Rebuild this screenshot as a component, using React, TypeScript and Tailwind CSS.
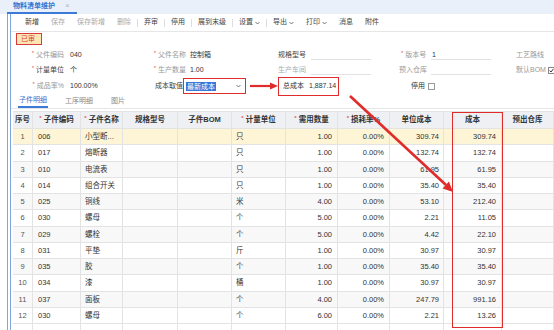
import React from 'react';

// 子件明细数据
interface Row {
  no: number;
  code: string;
  name: string;
  unit: string;
  qty: string;
  loss: string;
  price: string;
  cost: string;
}

const rows: Row[] = [
  { no: 1, code: "006", name: "小型断...", unit: "只", qty: "1.00", loss: "0.00%", price: "309.74", cost: "309.74" },
  { no: 2, code: "017", name: "熔断器", unit: "只", qty: "1.00", loss: "0.00%", price: "132.74", cost: "132.74" },
  { no: 3, code: "010", name: "电流表", unit: "只", qty: "1.00", loss: "0.00%", price: "61.95", cost: "61.95" },
  { no: 4, code: "014", name: "组合开关", unit: "只", qty: "1.00", loss: "0.00%", price: "35.40", cost: "35.40" },
  { no: 5, code: "025", name: "铜线", unit: "米", qty: "4.00", loss: "0.00%", price: "53.10", cost: "212.40" },
  { no: 6, code: "030", name: "螺母", unit: "个", qty: "5.00", loss: "0.00%", price: "2.21", cost: "11.05" },
  { no: 7, code: "029", name: "螺栓", unit: "个", qty: "5.00", loss: "0.00%", price: "4.42", cost: "22.10" },
  { no: 8, code: "031", name: "平垫", unit: "斤", qty: "1.00", loss: "0.00%", price: "30.97", cost: "30.97" },
  { no: 9, code: "035", name: "胶", unit: "个", qty: "1.00", loss: "0.00%", price: "35.40", cost: "35.40" },
  { no: 10, code: "034", name: "漆", unit: "桶", qty: "1.00", loss: "0.00%", price: "30.97", cost: "30.97" },
  { no: 11, code: "037", name: "面板", unit: "个", qty: "4.00", loss: "0.00%", price: "247.79", cost: "991.16" },
  { no: 12, code: "030", name: "螺母", unit: "个", qty: "6.00", loss: "0.00%", price: "2.21", cost: "13.26" },
];

const headers: { label: string; req?: boolean }[] = [
  { label: "序号" },
  { label: "子件编码", req: true },
  { label: "子件名称", req: true },
  { label: "规格型号" },
  { label: "子件BOM" },
  { label: "计量单位", req: true },
  { label: "需用数量", req: true },
  { label: "损耗率%", req: true },
  { label: "单位成本" },
  { label: "成本" },
  { label: "预出仓库" },
];

const cols = "grid grid-cols-[20px_48px_42px_55px_54px_54px_52px_52px_54px_58px_52px]";
const cell = "border-r border-b border-[#e3e3e3] h-full flex items-center overflow-hidden whitespace-nowrap";

const Star = () => <span className="text-[#e05a5a] text-[6px] mr-[2px] relative -top-[2px]">*</span>;

const tools = [
  { t: "新增" },
  { t: "保存", dim: true },
  { t: "保存新增", dim: true },
  { t: "删除", dim: true, sep: true },
  { t: "弃审", sep: true },
  { t: "停用", sep: true },
  { t: "展到末级", sep: true },
  { t: "设置", dd: true, sep: true },
  { t: "导出", dd: true },
  { t: "打印", dd: true },
  { t: "消息" },
  { t: "附件" },
];

const Caret = () => (
  <svg width="5" height="4" viewBox="0 0 5 4" className="ml-[2px]">
    <path d="M0.5 1 L2.5 3 L4.5 1" stroke="#666" strokeWidth="0.9" fill="none" />
  </svg>
);

const App: React.FC = () => {
  return (
    <div className="w-[554px] h-[330px] overflow-hidden relative bg-white text-[#333] font-['Liberation_Sans','Noto_Sans_CJK_SC',sans-serif]">
      {/* 页签栏 */}
      <div className="h-[14px] bg-[#eaf0f9] flex items-end">
        <div className="ml-[7px] w-[70px] h-full flex items-center border-b-2 border-[#3b7ad6] text-[7px] text-[#2f74d0]">
          <span className="ml-[6px] font-bold">物料清单维护</span>
          <span className="ml-[10px] text-[#aab4c4] text-[8px]">×</span>
        </div>
      </div>

      <div className="ml-[7px] border-l-[4px] border-double border-[#7ea5dd] h-[316px]">
        {/* 工具栏 */}
        <div className="h-[18px] flex items-center pl-[14px] border-b border-[#e6e6e6] text-[7px] whitespace-nowrap">
          {tools.map((b, i) => (
            <React.Fragment key={i}>
              <span className={`flex items-center ${b.dim ? "text-[#aaa]" : "text-[#444]"} ${b.sep ? "mr-[6px]" : "mr-[12px]"}`}>
                {b.t}
                {b.dd && <Caret />}
              </span>
              {b.sep && <span className="w-px h-[8px] bg-[#ddd] mr-[6px]" />}
            </React.Fragment>
          ))}
        </div>

        {/* 状态 */}
        <div className="h-[14px] flex items-center pl-[5px]">
          <span className="w-[26px] h-[12px] border border-[#d93a3a] bg-[#fde6b4] text-[#d93a3a] text-[7px] flex items-center pl-[4px]">已审</span>
        </div>

        {/* 表头表单 */}
        <div className="text-[7px] pt-[1px] whitespace-nowrap [&>div>div]:shrink-0">
          <div className="flex items-center h-[15.5px]">
            <div className="w-[53px] text-right text-[#999]"><Star />父件编码</div>
            <div className="w-[76px] pl-[6px]">040</div>
            <div className="w-[46px] text-right text-[#999]"><Star />父件名称</div>
            <div className="w-[92px] pl-[4px]">控制箱</div>
            <div className="w-[33px] text-[#444]">规格型号</div>
            <div className="w-[60px] h-[10px] border-b border-[#e2e2e2]" />
            <div className="w-[30px]" />
            <div className="w-[30px] text-[#999]"><Star />版本号</div>
            <div className="w-[60px] h-[10px] pl-[1px] border-b border-[#e2e2e2]">1</div>
            <div className="w-[25px]" />
            <div className="text-[#999]">工艺路线</div>
          </div>
          <div className="flex items-center h-[15.5px]">
            <div className="w-[53px] text-right text-[#444]"><Star />计量单位</div>
            <div className="w-[76px] pl-[6px]">个</div>
            <div className="w-[46px] text-right text-[#999]"><Star />生产数量</div>
            <div className="w-[92px] pl-[4px]">1.00</div>
            <div className="w-[33px] text-[#aaa]">生产车间</div>
            <div className="w-[60px] h-[10px] border-b border-[#e2e2e2]" />
            <div className="w-[28px]" />
            <div className="w-[32px] text-[#999]">预入仓库</div>
            <div className="w-[60px] h-[10px] border-b border-[#e2e2e2]" />
            <div className="w-[25px]" />
            <div className="flex items-center text-[#999]">
              默认BOM
              <span className="ml-[2px] w-[7px] h-[7px] border border-[#888] flex items-center justify-center">
                <svg width="5" height="5" viewBox="0 0 5 5"><path d="M0.6 2.6 L2 4 L4.5 0.8" stroke="#333" strokeWidth="1" fill="none" /></svg>
              </span>
            </div>
          </div>
          <div className="flex items-center h-[16px]">
            <div className="w-[53px] text-right text-[#999]"><Star />成品率%</div>
            <div className="w-[76px] pl-[6px]">100.00%</div>
            <div className="w-[43px] text-right text-[#444]">成本取值</div>
            <div className="w-[63px] h-[16px] border-[1.5px] border-[#e02b2b] flex items-center pl-[2px] pr-[4px]">
              <span className="bg-[#3977d6] text-white px-[1px] leading-[9px]">最新成本</span>
              <span className="flex-1" />
              <Caret />
            </div>
            <div className="w-[32px]" />
            <div className="w-[61px] h-[19px] border-[1.5px] border-[#e02b2b] flex items-center pl-[4px] text-[#333]">
              总成本<span className="ml-[5px]">1,887.14</span>
            </div>
            <div className="w-[72px]" />
            <div className="flex items-center">
              停用
              <span className="ml-[3px] w-[7px] h-[7px] border border-[#999] bg-white" />
            </div>
          </div>
        </div>

        {/* 子页签 */}
        <div className="h-[14px] mt-[1px] flex items-end text-[7px] border-b border-[#e6e6e6] pl-[7px]">
          <div className="h-full flex items-center border-b-2 border-[#3b7ad6] text-[#2f74d0] px-[1px]">子件明细</div>
          <div className="h-full flex items-center ml-[17px] text-[#888]">工序明细</div>
          <div className="h-full flex items-center ml-[18px] text-[#888]">图片</div>
        </div>

        {/* 表格 */}
        <div className="ml-[2px] mt-[2px] text-[7.5px]">
          <div className={`${cols} h-[18px] bg-[#eef0f3] font-bold text-[#333]`}>
            {headers.map((h, i) => (
              <div key={i} className={`${cell} justify-center border-t`}>
                {h.req && <Star />}
                {h.label}
              </div>
            ))}
          </div>
          {rows.map((r, i) => (
            <div
              key={r.no}
              className={`${cols} h-[16.25px] ${i === 0 ? "bg-[#fdf5d5]" : i % 2 === 0 ? "bg-[#f8f8f8]" : "bg-white"}`}
            >
              <div className={`${cell} justify-center text-[#555]`}>{r.no}</div>
              <div className={`${cell} pl-[5px]`}>{r.code}</div>
              <div className={`${cell} pl-[4px]`}>{r.name}</div>
              <div className={cell} />
              <div className={cell} />
              <div className={`${cell} pl-[4px]`}>{r.unit}</div>
              <div className={`${cell} justify-end pr-[5px]`}>{r.qty}</div>
              <div className={`${cell} justify-end pr-[5px]`}>{r.loss}</div>
              <div className={`${cell} justify-end pr-[4px]`}>{r.price}</div>
              <div className={`${cell} justify-end pr-[5px]`}>{r.cost}</div>
              <div className={cell} />
            </div>
          ))}
          <div className={`${cols} h-[16px] bg-white`}>
            {headers.map((_, i) => (
              <div key={i} className={cell} />
            ))}
          </div>
        </div>
      </div>

      {/* 标注：成本列红框 */}
      <div className="absolute left-[452px] top-[112px] w-[51px] h-[216px] border-[1.5px] border-[#e02b2b] pointer-events-none" />

      {/* 标注箭头 */}
      <svg className="absolute left-0 top-0 pointer-events-none" width="554" height="330" viewBox="0 0 554 330">
        <line x1="250" y1="86" x2="271" y2="86" stroke="#e02b2b" strokeWidth="2.2" />
        <polygon points="270,82.5 278,86 270,89.5" fill="#e02b2b" />
        <line x1="350" y1="96" x2="446" y2="185" stroke="#e02b2b" strokeWidth="2.6" />
        <polygon points="453,192 442.6,188.4 448.9,181.6" fill="#e02b2b" />
      </svg>
    </div>
  );
};

export default App;
